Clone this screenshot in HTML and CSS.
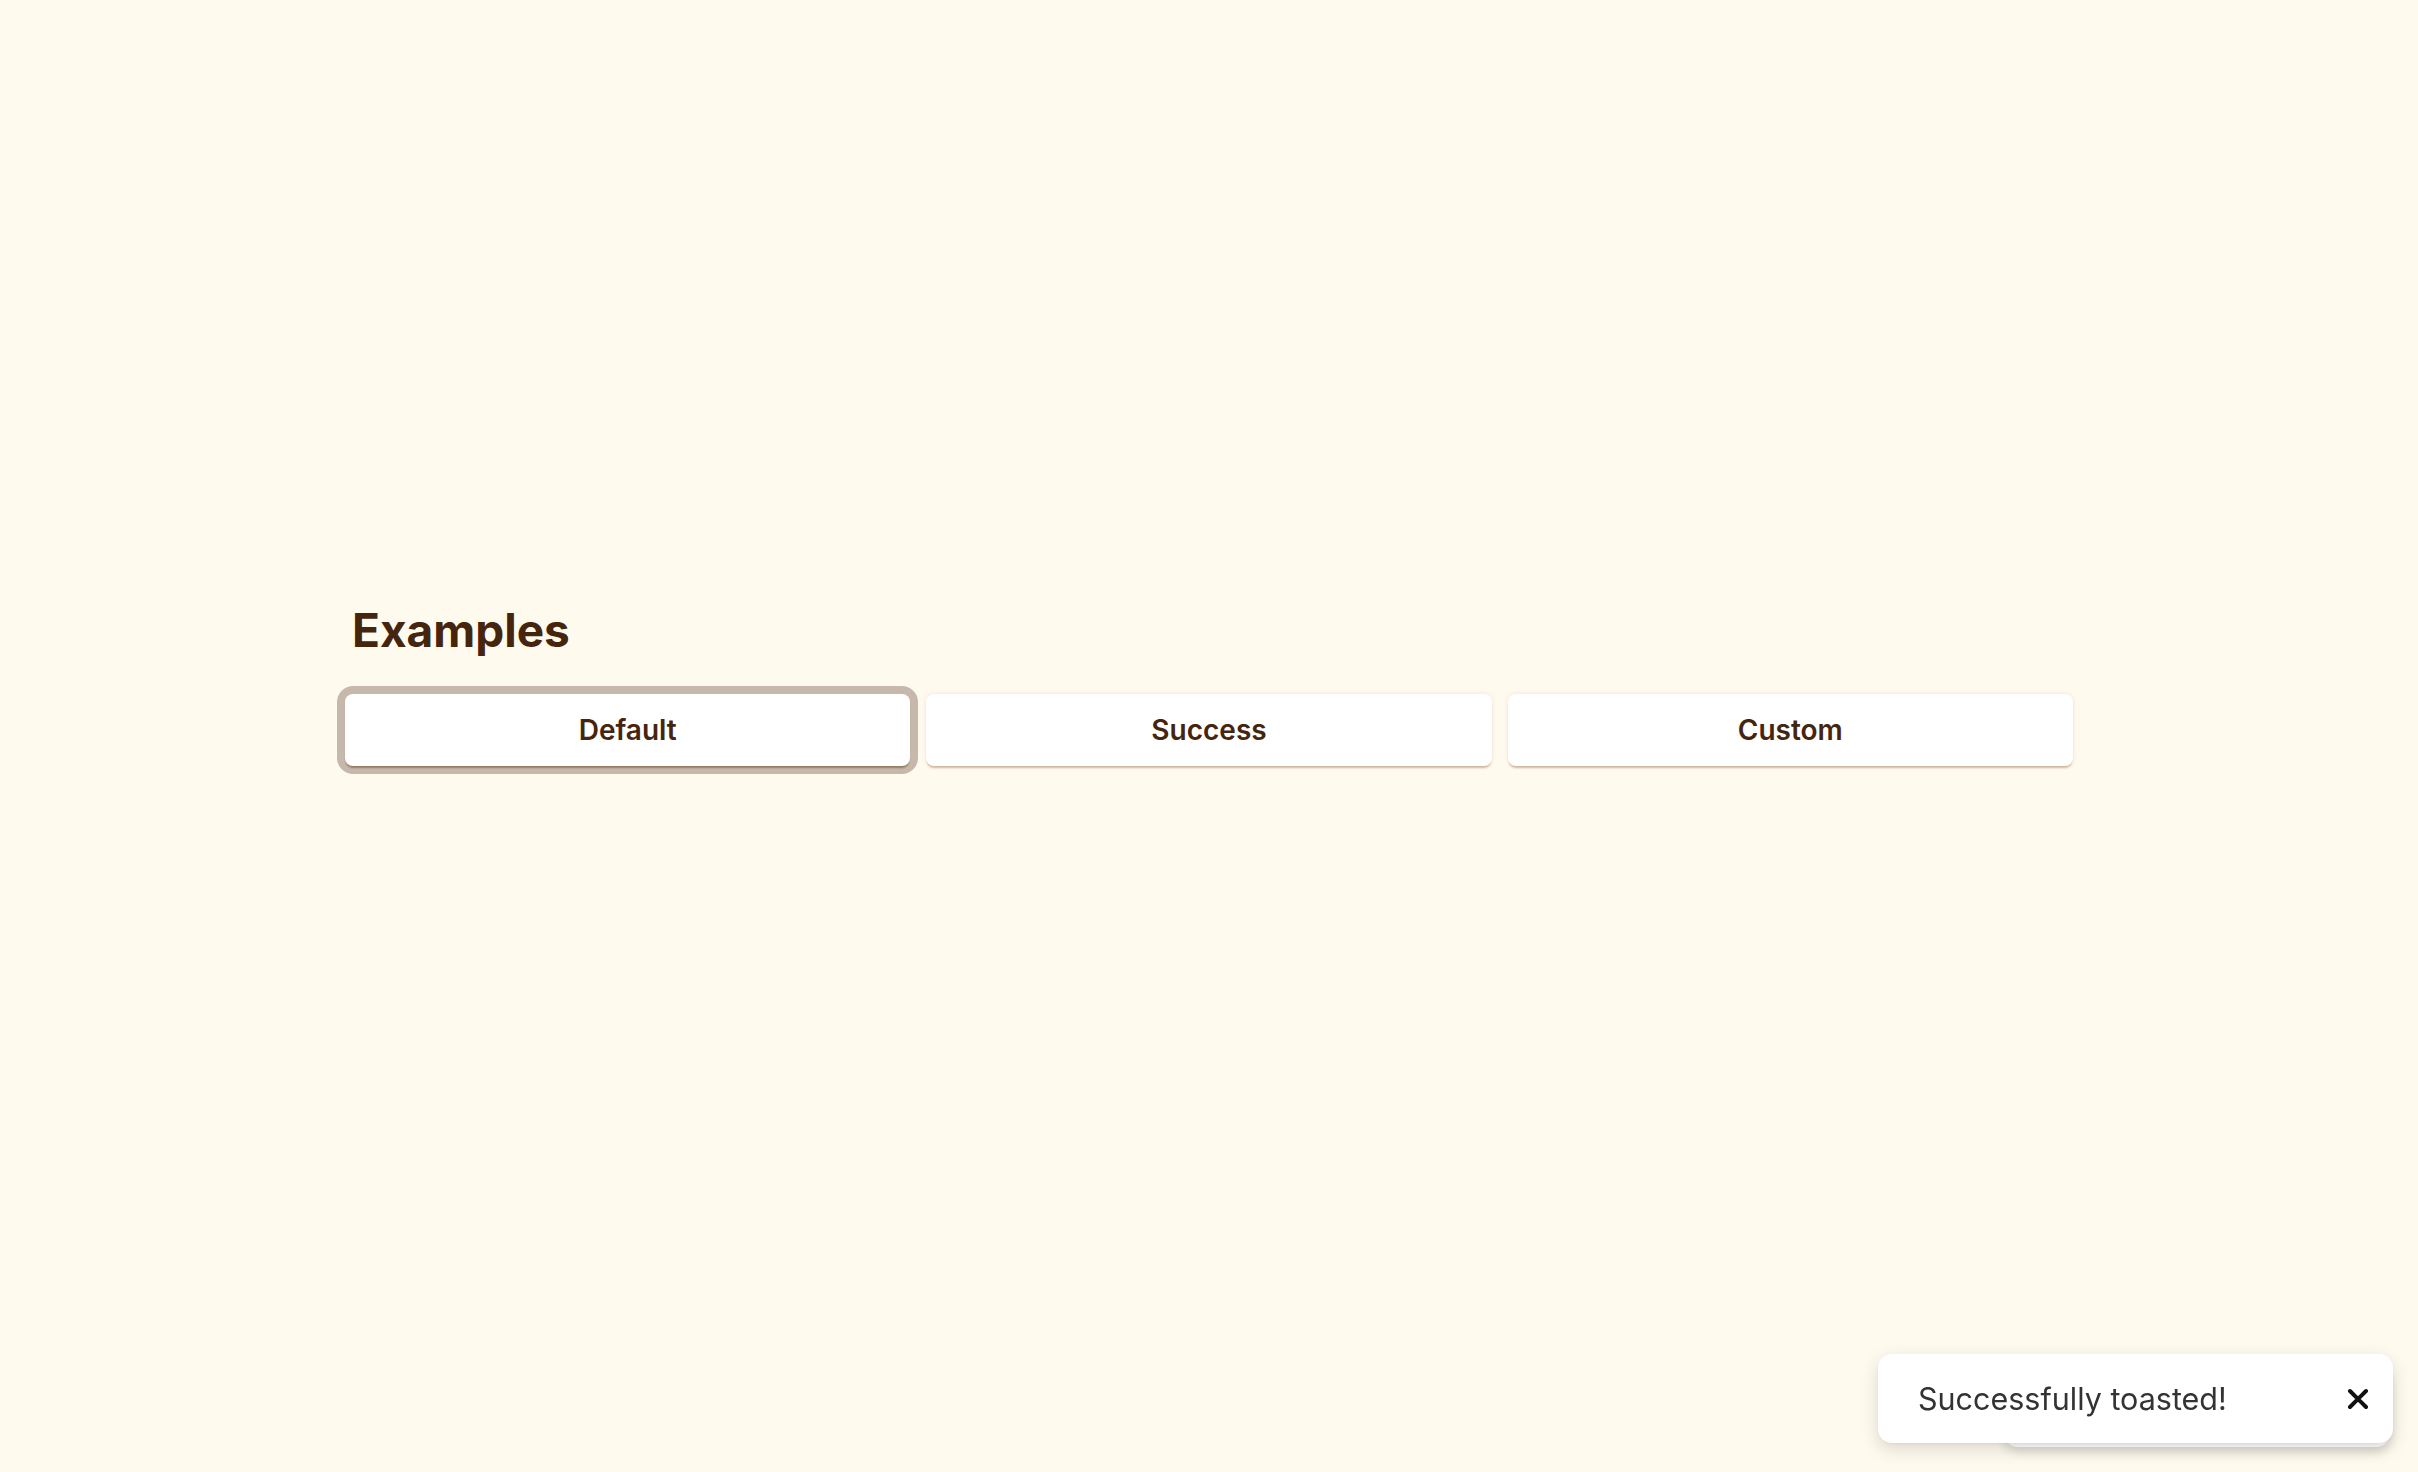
FILE: index.html
```html
<!DOCTYPE html>
<html lang="en">
<head>
<meta charset="utf-8">
<title>Examples</title>
<link rel="stylesheet" href="styles.css">
</head>
<body>
<main class="page">
  <h1 class="title">Examples</h1>
  <div class="buttons">
    <button class="btn btn-focused">Default</button>
    <button class="btn">Success</button>
    <button class="btn">Custom</button>
  </div>
</main>
<div class="toaster">
  <div class="toast-back"></div>
  <div class="toast">
    <span class="toast-text">Successfully toasted!</span>
    <button class="toast-close" aria-label="Close">
      <svg width="22" height="22" viewBox="0 0 22 22"><path d="M3 3 L19 19 M19 3 L3 19" stroke="#111" stroke-width="4" stroke-linecap="round"/></svg>
    </button>
  </div>
</div>
</body>
</html>
```

FILE: styles.css
```css
html, body {
  margin: 0;
  padding: 0;
}
body {
  background: #fffaee;
  font-family: Inter, "Noto Sans", sans-serif;
  min-height: 1472px;
}
.page {
  width: 1728px;
  margin: 0 auto;
  padding-top: 602px;
}
.title {
  margin: 0 0 36px 7px;
  font-size: 46px;
  line-height: 56px;
  font-weight: 700;
  color: #45250e;
  letter-spacing: 0;
}
.buttons {
  display: flex;
  gap: 16px;
}
.btn {
  flex: 1;
  height: 72px;
  border: none;
  border-radius: 8px;
  background: #ffffff;
  font-family: Inter, "Noto Sans", sans-serif;
  font-size: 28px;
  font-weight: 600;
  color: #45250e;
  box-shadow: 0 3px 2px -1px rgba(150, 100, 60, 0.4), 0 0 4px rgba(170, 130, 90, 0.18);
  cursor: pointer;
}
.btn-focused {
  box-shadow: 0 3px 2px -1px rgba(110, 70, 35, 0.55), 0 0 0 8px #c6b9ab;
}
.toaster {
  position: fixed;
  right: 25px;
  bottom: 29px;
  width: 515px;
  height: 89px;
}
.toast-back {
  position: absolute;
  right: 3px;
  bottom: -4px;
  width: 386px;
  height: 80px;
  border-radius: 14px;
  background: #ffffff;
  box-shadow: 0 4px 12px rgba(0, 0, 0, 0.16);
}
.toast {
  position: relative;
  display: flex;
  align-items: center;
  justify-content: space-between;
  height: 89px;
  box-sizing: border-box;
  padding: 0 19px 0 40px;
  background: #ffffff;
  border-radius: 14px;
  box-shadow: 0 6px 18px rgba(0, 0, 0, 0.14), 0 1px 3px rgba(0, 0, 0, 0.05);
}
.toast-text {
  font-size: 30.5px;
  color: #333333;
}
.toast-close {
  border: none;
  background: transparent;
  padding: 0;
  width: 32px;
  height: 32px;
  display: flex;
  align-items: center;
  justify-content: center;
}
```
